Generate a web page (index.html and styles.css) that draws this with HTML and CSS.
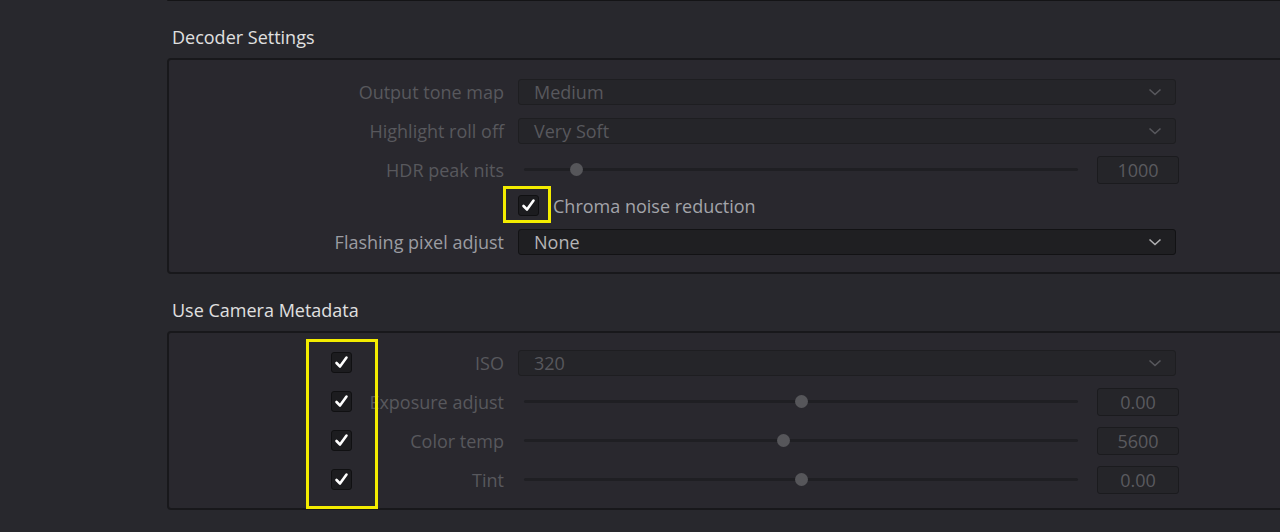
FILE: index.html
```html
<!DOCTYPE html>
<html>
<head>
<meta charset="utf-8">
<link rel="stylesheet" href="styles.css">
</head>
<body>
<div class="page">
  <div class="prev"></div>

  <div class="sec-title">Decoder Settings</div>
  <div class="box box-decoder">
    <div class="row">
      <div class="label dis">Output tone map</div>
      <div class="select dis"><span>Medium</span><svg class="chev" width="14" height="8" viewBox="0 0 14 8"><polyline points="1.5,1.5 7,6.5 12.5,1.5"/></svg></div>
    </div>
    <div class="row">
      <div class="label dis">Highlight roll off</div>
      <div class="select dis"><span>Very Soft</span><svg class="chev" width="14" height="8" viewBox="0 0 14 8"><polyline points="1.5,1.5 7,6.5 12.5,1.5"/></svg></div>
    </div>
    <div class="row">
      <div class="label dis">HDR peak nits</div>
      <div class="slider-ctl">
        <div class="track"><span class="knob" style="left:9.4%"></span></div>
        <div class="num">1000</div>
      </div>
    </div>
    <div class="row row-chk">
      <div class="label"></div>
      <div class="chk-line">
        <span class="chk-hl">
          <span class="chk"><svg width="21" height="21" viewBox="0 0 21 21"><path d="M5.5 11 L9 14.5 L15.5 5.5"/></svg></span>
        </span>
        <span class="chk-label">Chroma noise reduction</span>
      </div>
    </div>
    <div class="row">
      <div class="label">Flashing pixel adjust</div>
      <div class="select"><span>None</span><svg class="chev" width="14" height="8" viewBox="0 0 14 8"><polyline points="1.5,1.5 7,6.5 12.5,1.5"/></svg></div>
    </div>
  </div>

  <div class="sec-title">Use Camera Metadata</div>
  <div class="box box-meta">
    <div class="meta-hl"></div>
    <div class="row">
      <div class="label dis with-chk"><span class="chk"><svg width="21" height="21" viewBox="0 0 21 21"><path d="M5.5 11 L9 14.5 L15.5 5.5"/></svg></span><span class="txt">ISO</span></div>
      <div class="select dis"><span>320</span><svg class="chev" width="14" height="8" viewBox="0 0 14 8"><polyline points="1.5,1.5 7,6.5 12.5,1.5"/></svg></div>
    </div>
    <div class="row">
      <div class="label dis with-chk"><span class="chk"><svg width="21" height="21" viewBox="0 0 21 21"><path d="M5.5 11 L9 14.5 L15.5 5.5"/></svg></span><span class="txt">Exposure adjust</span></div>
      <div class="slider-ctl">
        <div class="track"><span class="knob" style="left:50%"></span></div>
        <div class="num">0.00</div>
      </div>
    </div>
    <div class="row">
      <div class="label dis with-chk"><span class="chk"><svg width="21" height="21" viewBox="0 0 21 21"><path d="M5.5 11 L9 14.5 L15.5 5.5"/></svg></span><span class="txt">Color temp</span></div>
      <div class="slider-ctl">
        <div class="track"><span class="knob" style="left:46.8%"></span></div>
        <div class="num">5600</div>
      </div>
    </div>
    <div class="row">
      <div class="label dis with-chk"><span class="chk"><svg width="21" height="21" viewBox="0 0 21 21"><path d="M5.5 11 L9 14.5 L15.5 5.5"/></svg></span><span class="txt">Tint</span></div>
      <div class="slider-ctl">
        <div class="track"><span class="knob" style="left:50%"></span></div>
        <div class="num">0.00</div>
      </div>
    </div>
  </div>
</div>
</body>
</html>
```

FILE: styles.css
```css
html, body {
  margin: 0;
  padding: 0;
  background: #28282d;
  overflow: hidden;
  width: 1280px;
  height: 532px;
}

.page {
  padding-left: 167px;
  font-family: "Open Sans", "Noto Sans", "Liberation Sans", sans-serif;
  font-size: 18px;
}

.prev {
  width: 1140px;
  height: 1px;
  background: #141416;
  border-bottom-left-radius: 3px;
}

.sec-title {
  height: 57px;
  box-sizing: border-box;
  padding: 25px 0 0 5px;
  line-height: 22px;
  color: #e0e0e0;
  font-size: 18px;
}

.box {
  position: relative;
  width: 1140px;
  box-sizing: border-box;
  border: 2px solid #18181b;
  border-radius: 4px;
  background: #29282e;
}

.box-decoder {
  padding: 12px 0 11px 0;
}

.box-meta {
  padding: 10px 0 9px 0;
}

.row {
  display: grid;
  grid-template-columns: 335px 661px;
  column-gap: 14px;
  height: 39px;
  align-items: center;
}

.row-chk {
  height: 33px;
}

.label {
  text-align: right;
  color: #9b9ca2;
  line-height: 24px;
  white-space: nowrap;
}

.label.dis {
  color: #58585d;
}

.with-chk {
  display: flex;
  align-items: center;
}

.with-chk .chk {
  margin-left: 162px;
}

.with-chk .txt {
  margin-left: auto;
}

.select {
  width: 658px;
  height: 26px;
  box-sizing: border-box;
  border: 1px solid #121214;
  border-radius: 3px;
  background: #1f1f22;
  display: flex;
  align-items: center;
  justify-content: space-between;
  padding: 0 13px 0 15px;
  color: #b4b4b6;
}

.select.dis {
  border-color: #1e1e21;
  background: #252529;
  color: #58585d;
}

.chev polyline {
  fill: none;
  stroke: #b0b0b2;
  stroke-width: 1.6;
}

.select.dis .chev polyline {
  stroke: #58585d;
}

.slider-ctl {
  display: flex;
  align-items: center;
}

.track {
  position: relative;
  flex: 1;
  height: 3px;
  margin: 0 19px 0 6px;
  background: #1f1f23;
  border-radius: 2px;
}

.knob {
  position: absolute;
  top: 50%;
  width: 13px;
  height: 13px;
  margin: -6.5px 0 0 -6.5px;
  border-radius: 50%;
  background: #56565a;
}

.num {
  width: 82px;
  height: 28px;
  box-sizing: border-box;
  border: 1px solid #1b1b1e;
  border-radius: 3px;
  background: #252529;
  color: #5a5a5f;
  text-align: center;
  line-height: 26px;
}

.chk-line {
  display: flex;
  align-items: center;
}

.chk-hl {
  position: relative;
  display: inline-flex;
}

.chk-hl::before {
  content: "";
  position: absolute;
  left: -15px;
  top: -9px;
  width: 48px;
  height: 37px;
  box-sizing: border-box;
  border: 3px solid #f3ec00;
}

.chk {
  display: inline-block;
  width: 21px;
  height: 21px;
  box-sizing: border-box;
  border: 1px solid #101012;
  border-radius: 3px;
  background: #1c1c1f;
  flex: none;
}

.chk svg {
  display: block;
  margin: -1px;
}

.chk path {
  fill: none;
  stroke: #ffffff;
  stroke-width: 2.6;
  stroke-linecap: round;
  stroke-linejoin: round;
}

.chk-label {
  margin-left: 14px;
  color: #a3a4aa;
  line-height: 24px;
}

.meta-hl {
  position: absolute;
  left: 137px;
  top: 6px;
  width: 72px;
  height: 170px;
  box-sizing: border-box;
  border: 3px solid #f3ec00;
}
```
